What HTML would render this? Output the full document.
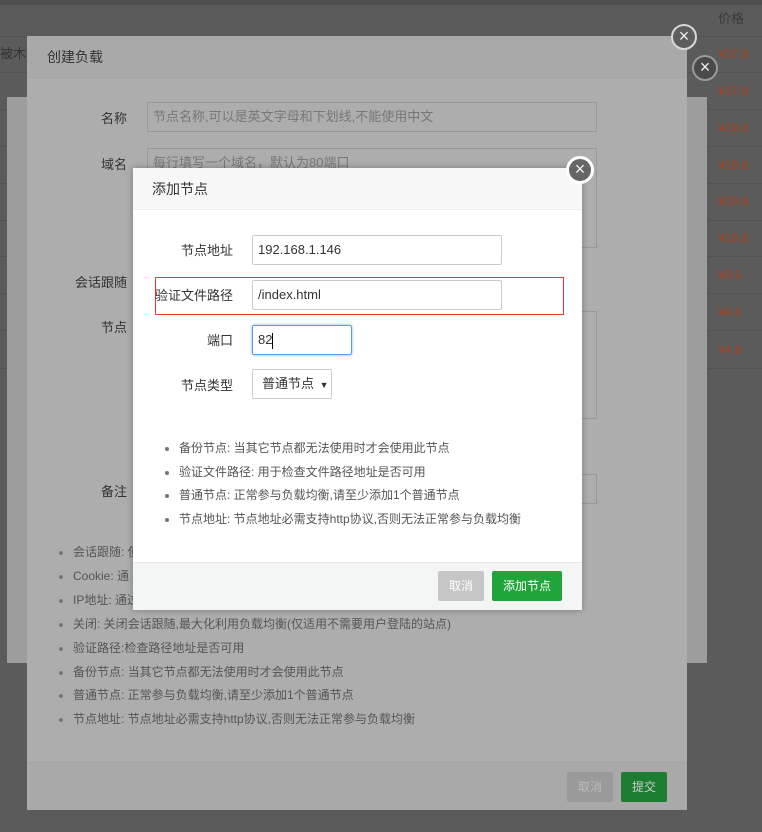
<!DOCTYPE html>
<html><head><meta charset="utf-8"><style>
*{box-sizing:border-box;margin:0;padding:0}
body{width:762px;height:832px;overflow:hidden;background:#5b5b5b;font-family:"Liberation Sans","Noto Sans CJK SC",sans-serif;font-size:12px;line-height:16px;position:relative}
.a{position:absolute}
.price{position:absolute;left:718px;color:#a8421e;font-size:12px;line-height:16px}
.row{position:absolute;left:0;width:762px;height:1px;background:#525252}
.close{position:absolute;width:26px;height:26px;border-radius:50%;background:#5e5e5e;border:2px solid #d8d8d8;color:#eee;font-size:18px;line-height:21px;text-align:center}
.lbl{position:absolute;text-align:right;color:#333;font-size:13px;line-height:16px}
.inp{position:absolute;border:1px solid #ccc;background:#fff;border-radius:2px;font-size:13px;color:#333;padding-left:5px}
.li{position:absolute;color:#555;font-size:12px;line-height:16px;white-space:nowrap}
.li:before{content:"";position:absolute;left:-14px;top:7px;width:4px;height:4px;border-radius:50%;background:#777}
</style></head><body>
<div class="a" style="left:0;top:0;width:762px;height:5px;background:#4f4f4f"></div>
<div class="a" style="left:718px;top:11px;color:#3a3a3a;font-size:13px">价格</div>
<div class="row" style="top:36px"></div><div class="row" style="top:72px"></div><div class="row" style="top:109px"></div><div class="row" style="top:146px"></div><div class="row" style="top:183px"></div><div class="row" style="top:220px"></div><div class="row" style="top:256px"></div><div class="row" style="top:293px"></div><div class="row" style="top:330px"></div><div class="row" style="top:368px"></div>
<div class="price" style="top:46px">¥37.8</div>
<div class="price" style="top:83px">¥37.8</div>
<div class="price" style="top:120px">¥19.8</div>
<div class="price" style="top:157px">¥19.8</div>
<div class="price" style="top:193px">¥19.8</div>
<div class="price" style="top:230px">¥19.8</div>
<div class="price" style="top:267px">¥9.9</div>
<div class="price" style="top:304px">¥4.8</div>
<div class="price" style="top:342px">¥4.8</div>
<div class="a" style="left:0;top:46px;color:#333;font-size:13px">被木</div>
<div class="a" style="left:7px;top:97px;width:700px;height:566px;background:#9d9d9d"></div>
<!-- create load -->
<div class="a" style="left:27px;top:36px;width:660px;height:774px;background:#adadad">
 <div class="a" style="left:0;top:0;width:660px;height:42px;background:#a9a9a9;border-bottom:1px solid #a2a2a2"></div>
 <div class="a" style="left:20px;top:13px;color:#333;font-size:14px">创建负载</div>
 <div class="lbl" style="left:50px;width:50px;top:75px">名称</div>
 <div class="a" style="left:120px;top:66px;width:450px;height:30px;border:1px solid #999;background:#adadad;color:#777;font-size:13px;padding:6px 5px;line-height:16px">节点名称,可以是英文字母和下划线,不能使用中文</div>
 <div class="lbl" style="left:50px;width:50px;top:121px">域名</div>
 <div class="a" style="left:120px;top:112px;width:450px;height:100px;border:1px solid #999;background:#adadad;color:#777;font-size:13px;padding:6px 5px;line-height:16px">每行填写一个域名，默认为80端口</div>
 <div class="lbl" style="left:40px;width:60px;top:239px">会话跟随</div>
 <div class="lbl" style="left:50px;width:50px;top:284px">节点</div>
 <div class="a" style="left:540px;top:275px;width:30px;height:108px;border:1px solid #999"></div>
 <div class="a" style="left:120px;top:438px;width:450px;height:30px;border:1px solid #999"></div>
 <div class="lbl" style="left:50px;width:50px;top:448px">备注</div>
 <div class="li" style="left:46px;top:508px">会话跟随: 使</div>
 <div class="li" style="left:46px;top:532px">Cookie: 通</div>
 <div class="li" style="left:46px;top:556px">IP地址: 通过</div>
 <div class="li" style="left:46px;top:580px">关闭: 关闭会话跟随,最大化利用负载均衡(仅适用不需要用户登陆的站点)</div>
 <div class="li" style="left:46px;top:604px">验证路径:检查路径地址是否可用</div>
 <div class="li" style="left:46px;top:628px">备份节点: 当其它节点都无法使用时才会使用此节点</div>
 <div class="li" style="left:46px;top:651px">普通节点: 正常参与负载均衡,请至少添加1个普通节点</div>
 <div class="li" style="left:46px;top:675px">节点地址: 节点地址必需支持http协议,否则无法正常参与负载均衡</div>
 <div class="a" style="left:0;top:726px;width:660px;height:48px;background:#a9a9a9;border-top:1px solid #a2a2a2"></div>
 <div class="a" style="left:540px;top:736px;width:46px;height:30px;background:#9a9a9a;color:#bbb;border-radius:2px;text-align:center;line-height:30px">取消</div>
 <div class="a" style="left:594px;top:736px;width:46px;height:30px;background:#1c7d32;color:#ccc;border-radius:2px;text-align:center;line-height:30px">提交</div>
</div>
<div class="close" style="left:671px;top:24px">×</div>
<div class="close" style="left:692px;top:55px;background:#4a4a4a;border-color:#9a9a9a">×</div>
<!-- add node -->
<div class="a" style="left:133px;top:168px;width:449px;height:442px;background:#fff;box-shadow:0 0 6px rgba(0,0,0,.3)">
 <div class="a" style="left:0;top:0;width:449px;height:42px;background:#f7f7f7;border-bottom:1px solid #eee"></div>
 <div class="a" style="left:19px;top:13px;color:#333;font-size:14px">添加节点</div>
 <div class="lbl" style="left:20px;width:80px;top:75px">节点地址</div>
 <div class="inp" style="left:119px;top:67px;width:250px;height:30px;line-height:28px">192.168.1.146</div>
 <div class="a" style="left:22px;top:109px;width:409px;height:38px;border:1px solid #e33"></div>
 <div class="lbl" style="left:20px;width:80px;top:120px">验证文件路径</div>
 <div class="inp" style="left:119px;top:112px;width:250px;height:30px;line-height:28px">/index.html</div>
 <div class="lbl" style="left:20px;width:80px;top:165px">端口</div>
 <div class="inp" style="left:119px;top:157px;width:100px;height:30px;line-height:28px;border-color:#5b9bef;box-shadow:0 0 3px #8bb8f5">82<span style="border-left:1px solid #000;height:16px;display:inline-block;vertical-align:middle"></span></div>
 <div class="lbl" style="left:20px;width:80px;top:210px">节点类型</div>
 <div class="inp" style="left:119px;top:201px;width:80px;height:30px;line-height:28px;padding-left:9px">普通节点 <span style="font-size:9px;margin-left:2px">▼</span></div>
 <div class="li" style="left:46px;top:272px">备份节点: 当其它节点都无法使用时才会使用此节点</div>
 <div class="li" style="left:46px;top:296px">验证文件路径: 用于检查文件路径地址是否可用</div>
 <div class="li" style="left:46px;top:319px">普通节点: 正常参与负载均衡,请至少添加1个普通节点</div>
 <div class="li" style="left:46px;top:343px">节点地址: 节点地址必需支持http协议,否则无法正常参与负载均衡</div>
 <div class="a" style="left:0;top:394px;width:449px;height:48px;background:#f4f5f5;border-top:1px solid #e8e8e8"></div>
 <div class="a" style="left:305px;top:403px;width:46px;height:30px;background:#c6c6c6;color:#fff;border-radius:2px;text-align:center;line-height:30px">取消</div>
 <div class="a" style="left:359px;top:403px;width:70px;height:30px;background:#20a53a;color:#fff;border-radius:2px;text-align:center;line-height:30px">添加节点</div>
</div>
<div class="close" style="left:566px;top:156px;width:28px;height:28px;background:#666;border:3px solid #fff;line-height:21px">×</div>
</body></html>
